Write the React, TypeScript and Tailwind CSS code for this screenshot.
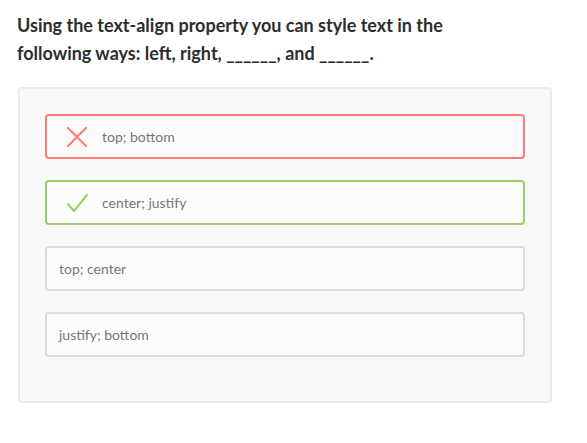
import React from "react";

type Option = { label: string; state?: "wrong" | "right" };

const OPTIONS: Option[] = [
  { label: "top; bottom", state: "wrong" },
  { label: "center; justify", state: "right" },
  { label: "top; center" },
  { label: "justify; bottom" },
];

const Cross = () => (
  <svg width="20" height="20" viewBox="0 0 20 20" className="shrink-0">
    <path d="M1 1 L19 19 M19 1 L1 19" stroke="#ff7b73" strokeWidth="2" strokeLinecap="round" />
  </svg>
);

const Check = () => (
  <svg width="21" height="18" viewBox="0 0 21 18" className="shrink-0">
    <path d="M1 10 L7 17 L20 1" stroke="#99cf66" strokeWidth="2" fill="none" strokeLinecap="round" strokeLinejoin="round" />
  </svg>
);

const OptionRow = ({ opt }: { opt: Option }) => {
  const border =
    opt.state === "wrong"
      ? "border-[#ff7b73]"
      : opt.state === "right"
      ? "border-[#99cf66]"
      : "border-[#dddddd]";
  return (
    <div className={`h-[45px] rounded-[4px] border-2 ${border} bg-[#fcfcfc] flex items-center`}>
      {opt.state ? (
        <div className="flex items-center pl-[20px]">
          <div className="w-[35px] flex items-center">
            {opt.state === "wrong" ? <Cross /> : <Check />}
          </div>
          <span className="text-[14px] text-[#777777]">{opt.label}</span>
        </div>
      ) : (
        <span className="pl-[12px] text-[14px] text-[#777777]">{opt.label}</span>
      )}
    </div>
  );
};

export default function App() {
  return (
    <div className="w-[587px] h-[443px] bg-white font-['Lato',sans-serif]">
      <div className="pt-[11px] px-[17px]">
        <h1 className="text-[18px] leading-[28px] font-bold text-[#2d2d2d]">
          Using the text-align property you can style text in the
          <br />
          following ways: left, right, ______, and ______.
        </h1>
      </div>

      <div className="mt-[20px] ml-[18px] w-[534px] h-[316px] rounded-[4px] border-2 border-[#ececec] bg-[#f9f9f9] px-[25px] pt-[25px]">
        <div className="flex flex-col gap-[21px]">
          {OPTIONS.map((o) => (
            <OptionRow key={o.label} opt={o} />
          ))}
        </div>
      </div>
    </div>
  );
}
